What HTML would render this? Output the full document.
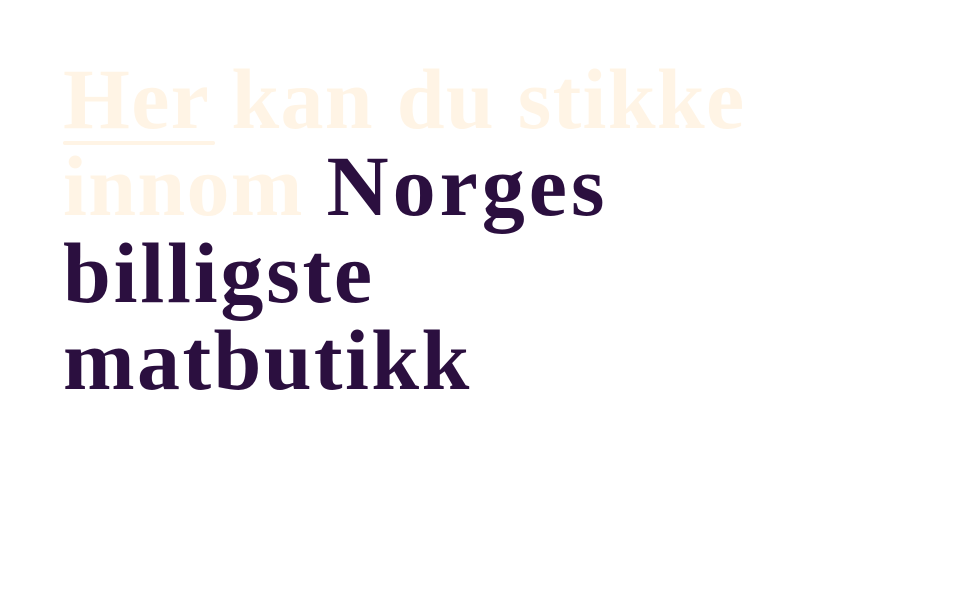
<!DOCTYPE html>
<html><head><meta charset="utf-8"><style>
html,body{margin:0;padding:0;background:#fff;width:980px;height:600px;overflow:hidden}
.t{position:absolute;left:63px;top:56px;font-family:"Liberation Serif",serif;font-weight:bold;font-size:86px;line-height:87px;letter-spacing:1.3px;color:#2B0F3F;white-space:nowrap}
.c{color:#FFF4E5}
.u{position:absolute;left:63px;top:141px;width:152px;height:4px;border-radius:2px;background:#FFF4E5}
</style></head><body>
<div class="t"><span class="c">Her kan du stikke</span><br><span class="c">innom</span> <span style="letter-spacing:4px">Norges</span><br><span style="letter-spacing:2.8px">billigste</span><br><span style="letter-spacing:2.4px">matbutikk</span></div>
<div class="u"></div>
</body></html>
